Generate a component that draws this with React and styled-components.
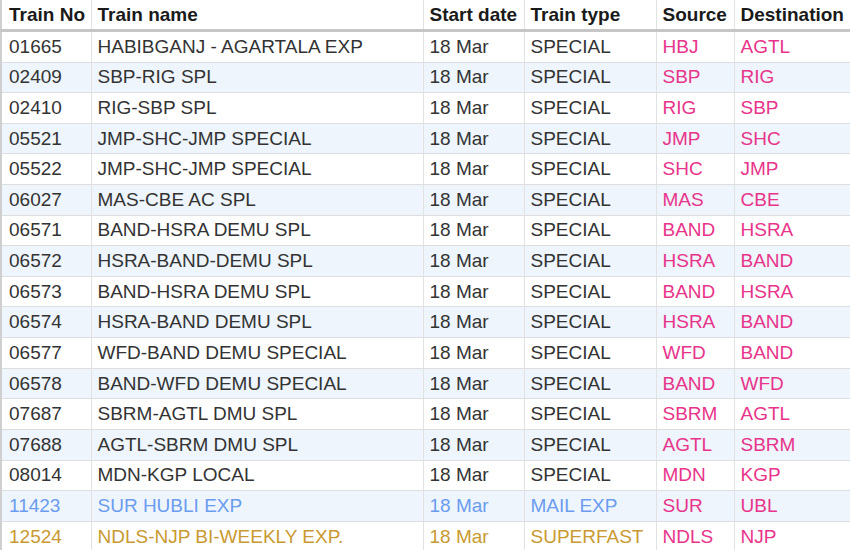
import React from 'react';
import styled, { createGlobalStyle } from 'styled-components';

const GlobalStyle = createGlobalStyle`
  html, body {
    margin: 0;
    padding: 0;
    background: #ffffff;
  }
  body {
    font-family: 'Liberation Sans', Arial, sans-serif;
    overflow: hidden;
  }
`;

const Table = styled.table`
  border-collapse: collapse;
  table-layout: fixed;
  width: 100%;
  border-left: 2px solid #cfcfcf;
  font-size: 19px;
`;

const HeadCell = styled.th`
  height: 29px;
  padding: 0 0 0 6px;
  text-align: left;
  font-weight: bold;
  color: #1a1a1a;
  background: #ffffff;
  border-left: 1px solid #e2e2e2;
  border-bottom: 3px solid #c6c6c6;
  white-space: nowrap;
  overflow: hidden;
  vertical-align: middle;

  &:first-child {
    border-left: none;
    padding-left: 7px;
  }
`;

const Row = styled.tr`
  background: ${({ $alt }) => ($alt ? '#eef5fc' : '#ffffff')};
  color: ${({ $tone }) =>
    $tone === 'mail' ? '#6b9cf0' : $tone === 'fast' ? '#c99a31' : '#333333'};
`;

const Cell = styled.td`
  height: 29.62px;
  padding: 0 0 0 6px;
  border-left: 1px solid #e2e2e2;
  border-bottom: 1px solid #dedede;
  white-space: nowrap;
  overflow: hidden;
  vertical-align: middle;
  color: ${({ $station }) => ($station ? '#e8348a' : 'inherit')};

  &:first-child {
    border-left: none;
    padding-left: 7px;
  }
`;

const columns = [
  { label: 'Train No', width: 90 },
  { label: 'Train name', width: 332 },
  { label: 'Start date', width: 101 },
  { label: 'Train type', width: 132 },
  { label: 'Source', width: 78 },
  { label: 'Destination' },
];

const trains = [
  ['01665', 'HABIBGANJ - AGARTALA EXP', 'SPECIAL', 'HBJ', 'AGTL'],
  ['02409', 'SBP-RIG SPL', 'SPECIAL', 'SBP', 'RIG'],
  ['02410', 'RIG-SBP SPL', 'SPECIAL', 'RIG', 'SBP'],
  ['05521', 'JMP-SHC-JMP SPECIAL', 'SPECIAL', 'JMP', 'SHC'],
  ['05522', 'JMP-SHC-JMP SPECIAL', 'SPECIAL', 'SHC', 'JMP'],
  ['06027', 'MAS-CBE AC SPL', 'SPECIAL', 'MAS', 'CBE'],
  ['06571', 'BAND-HSRA DEMU SPL', 'SPECIAL', 'BAND', 'HSRA'],
  ['06572', 'HSRA-BAND-DEMU SPL', 'SPECIAL', 'HSRA', 'BAND'],
  ['06573', 'BAND-HSRA DEMU SPL', 'SPECIAL', 'BAND', 'HSRA'],
  ['06574', 'HSRA-BAND DEMU SPL', 'SPECIAL', 'HSRA', 'BAND'],
  ['06577', 'WFD-BAND DEMU SPECIAL', 'SPECIAL', 'WFD', 'BAND'],
  ['06578', 'BAND-WFD DEMU SPECIAL', 'SPECIAL', 'BAND', 'WFD'],
  ['07687', 'SBRM-AGTL DMU SPL', 'SPECIAL', 'SBRM', 'AGTL'],
  ['07688', 'AGTL-SBRM DMU SPL', 'SPECIAL', 'AGTL', 'SBRM'],
  ['08014', 'MDN-KGP LOCAL', 'SPECIAL', 'MDN', 'KGP'],
  ['11423', 'SUR HUBLI EXP', 'MAIL EXP', 'SUR', 'UBL', 'mail'],
  ['12524', 'NDLS-NJP BI-WEEKLY EXP.', 'SUPERFAST', 'NDLS', 'NJP', 'fast'],
];

const App = () => {
  return (
    <>
      <GlobalStyle />
      <Table>
        <colgroup>
          {columns.map((c) => (
            <col key={c.label} style={c.width ? { width: c.width } : undefined} />
          ))}
        </colgroup>
        <thead>
          <tr>
            {columns.map((c) => (
              <HeadCell key={c.label}>{c.label}</HeadCell>
            ))}
          </tr>
        </thead>
        <tbody>
          {trains.map(([no, name, type, src, dst, tone], i) => (
            <Row key={no} $alt={i % 2 === 1} $tone={tone}>
              <Cell>{no}</Cell>
              <Cell>{name}</Cell>
              <Cell>18 Mar</Cell>
              <Cell>{type}</Cell>
              <Cell $station>{src}</Cell>
              <Cell $station>{dst}</Cell>
            </Row>
          ))}
        </tbody>
      </Table>
    </>
  );
};

export default App;
